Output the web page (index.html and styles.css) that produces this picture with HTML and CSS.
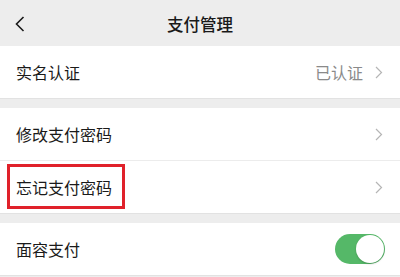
FILE: index.html
```html
<!DOCTYPE html>
<html lang="zh-CN">
<head>
<meta charset="utf-8">
<link rel="stylesheet" href="styles.css">
</head>
<body>
<div class="page">
  <header class="nav">
    <svg class="back" width="12" height="16" viewBox="0 0 12 16"><path d="M9.5 1 L2.5 8 L9.5 15" fill="none" stroke="#1a1a1a" stroke-width="1.6"/></svg>
    <div class="title">支付管理</div>
  </header>
  <section class="group first">
    <div class="row">
      <span class="label">实名认证</span>
      <span class="value">已认证</span>
      <svg class="chev" width="8" height="13" viewBox="0 0 8 13"><path d="M1 1 L6.5 6.5 L1 12" fill="none" stroke="#b5b5b5" stroke-width="1.2"/></svg>
    </div>
  </section>
  <section class="group">
    <div class="row divided">
      <span class="label">修改支付密码</span>
      <svg class="chev" width="8" height="13" viewBox="0 0 8 13"><path d="M1 1 L6.5 6.5 L1 12" fill="none" stroke="#b5b5b5" stroke-width="1.2"/></svg>
    </div>
    <div class="row">
      <span class="label">忘记支付密码</span>
      <svg class="chev" width="8" height="13" viewBox="0 0 8 13"><path d="M1 1 L6.5 6.5 L1 12" fill="none" stroke="#b5b5b5" stroke-width="1.2"/></svg>
      <div class="highlight"></div>
    </div>
  </section>
  <section class="group">
    <div class="row">
      <span class="label">面容支付</span>
      <div class="toggle"><div class="knob"></div></div>
    </div>
  </section>
</div>
</body>
</html>
```

FILE: styles.css
```css
html, body {
  margin: 0;
  padding: 0;
  background: #ededed;
}
body {
  font-family: "Noto Sans CJK SC", "Noto Sans", sans-serif;
  color: #1a1a1a;
  width: 400px;
  height: 277px;
  overflow: hidden;
}
.page {
  display: flex;
  flex-direction: column;
}
.nav {
  height: 46px;
  display: flex;
  align-items: center;
  justify-content: center;
  position: relative;
  background: #ededed;
}
.back {
  position: absolute;
  left: 14px;
  top: 16px;
}
.title {
  font-size: 16.5px;
  font-weight: 500;
  color: #191919;
  margin-top: 2px;
}
.group {
  background: #fff;
  margin-top: 9px;
  border-bottom: 1px solid #e2e2e2;
}
.group.first {
  margin-top: 0;
}
.row {
  height: 52px;
  display: flex;
  align-items: center;
  padding: 0 16px;
  position: relative;
}
.row.divided {
  border-bottom: 1px solid #ececec;
}
.label {
  flex: 1;
  font-size: 16px;
  color: #1a1a1a;
}
.value {
  font-size: 16px;
  color: #8a8a8a;
  margin-right: 12px;
}
.chev {
  margin-right: 1px;
}
.highlight {
  position: absolute;
  left: 7px;
  top: 3px;
  width: 112px;
  height: 39px;
  border: 3px solid #e0212a;
}
.toggle {
  width: 50px;
  height: 30px;
  border-radius: 15px;
  background: #55b868;
  position: relative;
  margin-right: -1px;
}
.knob {
  position: absolute;
  right: 1px;
  top: 1px;
  width: 28px;
  height: 28px;
  border-radius: 50%;
  background: #fff;
  box-shadow: 0 1px 2px rgba(0,0,0,0.2);
}
```
